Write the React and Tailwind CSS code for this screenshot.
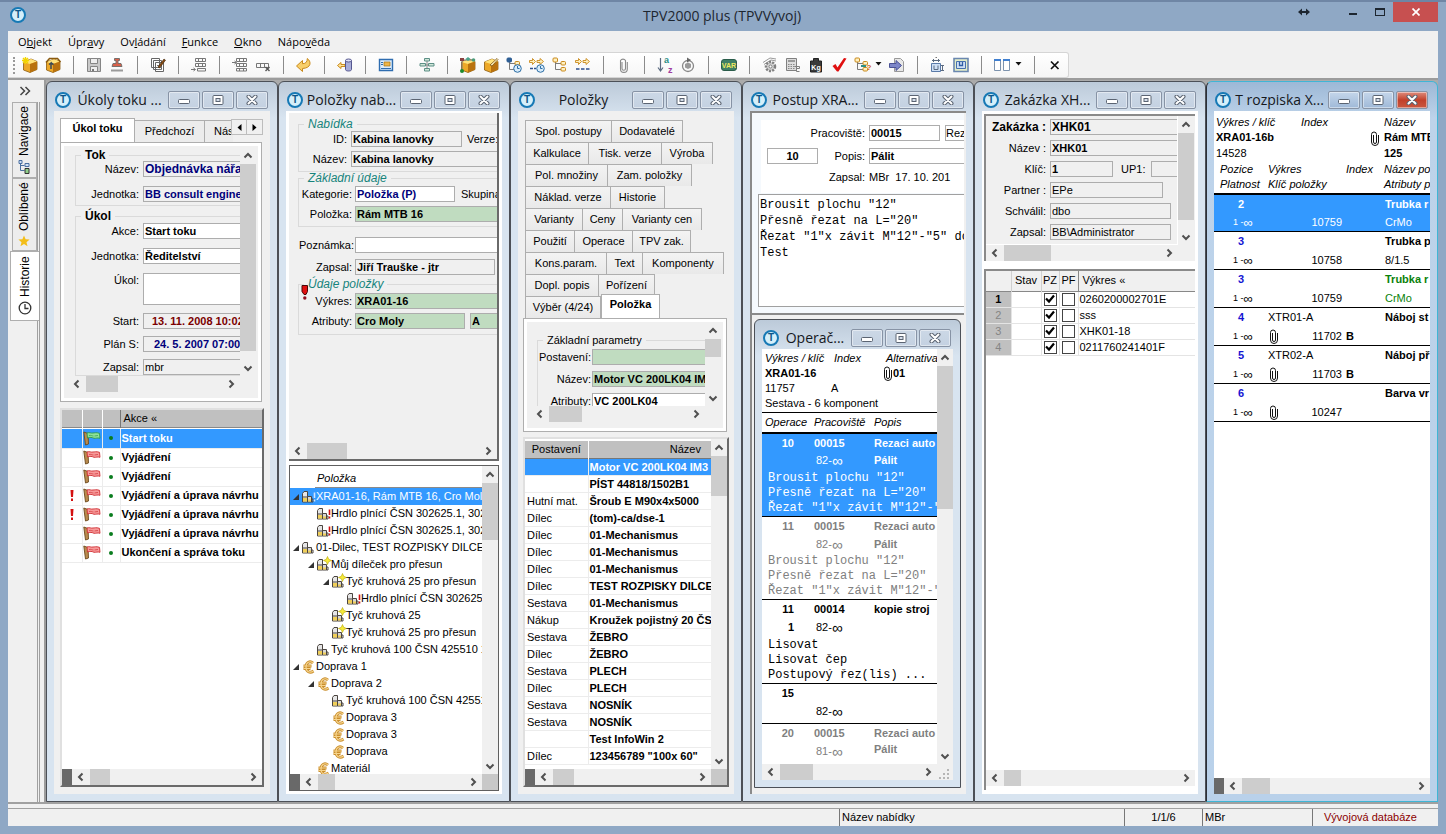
import React from "react";

/* ---------- small shared pieces ---------- */

function Logo() {
  return (
    <span
      aria-hidden="true"
      className="grid h-4 w-4 shrink-0 place-items-center rounded-full border-2 border-[#1679b5] bg-[#d5effa] font-['Liberation_Sans',sans-serif] text-[10px] leading-none font-bold text-[#0f5686]"
    >
      T
    </span>
  );
}

const chevrons = {
  left: "M6.5 1.5 3 5l3.5 3.5",
  right: "M3.5 1.5 7 5 3.5 8.5",
  up: "M1.5 6.5 5 3l3.5 3.5",
  down: "M1.5 3.5 5 7l3.5-3.5",
};

function Chevron({ dir }) {
  return (
    <svg viewBox="0 0 10 10" className="h-[10px] w-[10px]" fill="none" stroke="#505050" strokeWidth="2">
      <path d={chevrons[dir]} />
    </svg>
  );
}

function HScroll({ thumb, dark, corner, className = "" }) {
  return (
    <div className={`flex h-4 shrink-0 bg-[#f0f0f0] ${className}`}>
      {dark && <span className="w-[10px] bg-[#696969]" />}
      <button type="button" aria-label="Doleva" className="grid w-[18px] place-items-center">
        <Chevron dir="left" />
      </button>
      <span className={`bg-[#cdcdcd] ${thumb}`} />
      <button type="button" aria-label="Doprava" className="ml-auto grid w-[18px] place-items-center">
        <Chevron dir="right" />
      </button>
      {corner && <span className="w-4 bg-[#c8c8c8]" />}
    </div>
  );
}

function VScroll({ thumb, className = "" }) {
  return (
    <div className={`flex w-4 shrink-0 flex-col bg-[#f0f0f0] ${className}`}>
      <button type="button" aria-label="Nahoru" className="grid h-[17px] place-items-center">
        <Chevron dir="up" />
      </button>
      <span className={`bg-[#cdcdcd] ${thumb}`} />
      <button type="button" aria-label="Dolů" className="mt-auto grid h-[17px] place-items-center">
        <Chevron dir="down" />
      </button>
    </div>
  );
}

function Field({ label, value = "", lw, w = "w-[170px]", box = "bg-transparent", text = "font-bold", gap = "pr-1" }) {
  return (
    <label className="flex shrink-0 items-center">
      <span className={`shrink-0 text-right whitespace-nowrap ${gap} ${lw}`}>{label}</span>
      <input
        readOnly
        value={value}
        className={`h-4 min-w-0 shrink-0 border border-[#adadad] px-px leading-none outline-none ${w} ${box} ${text}`}
      />
    </label>
  );
}

function Group({ title, legend, children, className = "" }) {
  return (
    <fieldset className={`min-w-0 border border-r-0 border-[#dadada] ${className}`}>
      <legend className={`ml-[5px] px-1 leading-3 ${legend}`}>{title}</legend>
      {children}
    </fieldset>
  );
}

function WinButtons({ active }) {
  const base =
    "grid h-[18px] w-8 place-items-center rounded-[2px] border border-[#8793a5] bg-linear-to-b shadow-[inset_0_0_0_1px_rgba(255,255,255,0.45)]";
  const tone = active ? "from-[#c5d6ea] to-[#9fb9d8]" : "from-[#ccd8e6] to-[#c4d1e1]";
  return (
    <div className="flex gap-[2px]">
      <button type="button" aria-label="Minimalizovat" className={`${base} ${tone}`}>
        <svg viewBox="0 0 12 10" className="h-[10px] w-3">
          <rect x="0.5" y="4.5" width="11" height="4" rx="1" fill="#fff" stroke="#5b6472" />
        </svg>
      </button>
      <button type="button" aria-label="Maximalizovat" className={`${base} ${tone}`}>
        <svg viewBox="0 0 12 10" className="h-[10px] w-3">
          <rect x="1" y="0.5" width="10" height="9" rx="1" fill="#fff" stroke="#5b6472" />
          <rect x="4" y="3.5" width="4" height="3" fill="#d5deea" stroke="#5b6472" />
        </svg>
      </button>
      <button
        type="button"
        aria-label="Zavřít"
        className={`${base} ${active ? "border-[#7b2a22] from-[#dd8b7c] via-[#c2402a] to-[#c9573f]" : tone}`}
      >
        <svg viewBox="0 0 12 10" className="h-[10px] w-3" strokeLinecap="round">
          <path d="M2.5 1.5 9.5 8.5M9.5 1.5 2.5 8.5" stroke="#5b6472" strokeWidth="4" />
          <path d="M2.5 1.5 9.5 8.5M9.5 1.5 2.5 8.5" stroke="#fff" strokeWidth="2" />
        </svg>
      </button>
    </div>
  );
}

function Win({ title, active, className = "", body = "bg-[#f0f0f0]", children }) {
  const frame = active
    ? "border-[#3fb6d6] from-[#9db8d6] via-[#bdd3ea] to-[#b9d1ea] border-l-[#2b2f36]"
    : "border-[#4c5057] from-[#bccad9] via-[#d8e4f0] to-[#d8e4f0]";
  return (
    <section
      aria-label={title}
      className={`flex min-h-0 min-w-0 flex-col rounded-t-[6px] border bg-linear-to-b via-[36px] px-[7px] pb-[7px] ${frame} ${className}`}
    >
      <header className="flex h-[29px] shrink-0 items-center gap-[2px] pt-[7px] pr-[2px] pl-px">
        <Logo />
        <h2 className="min-w-0 flex-1 overflow-hidden text-center font-['Open_Sans',sans-serif] text-[14px] leading-5 whitespace-nowrap text-[#15181d]">
          {title}
        </h2>
        <WinButtons active={active} />
      </header>
      <div className={`flex min-h-0 flex-1 flex-col overflow-hidden ${body}`}>{children}</div>
    </section>
  );
}

function Clip({ className = "" }) {
  return (
    <svg viewBox="0 0 8 15" className={`inline-block h-[15px] w-2 shrink-0 ${className}`} fill="none" stroke="#111">
      <path d="M2.5 4v7a1.5 1.5 0 0 0 3 0V3.5a2.5 2.5 0 0 0-5 0v7.5a3.5 3.5 0 0 0 7 0V4" />
    </svg>
  );
}

/* ---------- toolbar icons, 16 x 16 ---------- */

const Cube = () => (
  <>
    <path d="M1.500 5 9 2l6 2.500v8L8 15.500 1.500 13z" fill="#eda828" stroke="#8a5a10" strokeWidth=".8" />
    <path d="M1.500 5 8 7l7-2.500L9 2z" fill="#ffe27a" />
    <path d="M8 7v8.500l7-3v-8z" fill="#b9720f" />
  </>
);
const Grid3 = ({ y = 1, c = "#777" }) => (
  <g fill="none" stroke={c}>
    <path d={`M4.500 ${y + 0.5}h10v3h-10zM4.500 ${y + 5.5}h10v3h-10zM7.500 ${y + 0.5}v3M11.500 ${y + 0.5}v3M7.500 ${y + 5.5}v3M11.500 ${y + 5.5}v3`} />
  </g>
);
const Clock = () => (
  <g>
    <circle cx="11.500" cy="11.500" r="3.800" fill="#d8ecfb" stroke="#2d6ea5" />
    <path d="M11.500 9v2.500h2" stroke="#2d6ea5" fill="none" />
  </g>
);
const Arrows = () => (
  <path d="M0.500 3.500h3V1.500L6.500 4.500l-3 3v-2h-3zM8 3.500h3V1.500l3.500 3-3.500 3v-2H8z" fill="#fff0c0" stroke="#c98a1c" strokeWidth=".9" />
);
const Tree = ({ c = "#c98a1c", f = "#fff0c0" }) => (
  <>
    <path d="M3.500 4v8.500h6M3.500 6.500h6" stroke="#7b7b7b" fill="none" />
    <rect x="1" y="1" width="4.500" height="4" rx="1" fill={f} stroke={c} />
    <rect x="9" y="4.500" width="4.500" height="3.500" rx="1" fill="#fff0c0" stroke="#c98a1c" />
    <rect x="9" y="10.500" width="4.500" height="3.500" rx="1" fill="#fff0c0" stroke="#c98a1c" />
  </>
);

const icons = {
  newBox: (
    <>
      <Cube />
      <path d="M3.500 0v7M0 3.500h7M1 1l5 5M6 1 1 6" stroke="#f2d400" strokeWidth="1.400" />
    </>
  ),
  openBox: (
    <>
      <Cube />
      <path d="M1 5.500 4.500 1.500h8L15.500 5" fill="none" stroke="#8a5a10" strokeWidth="1.600" />
      <path d="M6 12V6l-2 1.500M6 6l2.500 1.500" fill="none" stroke="#3c4a55" strokeWidth="1.500" />
    </>
  ),
  save: (
    <>
      <path d="M1.500 1.500h13v13h-13z" fill="#c9c9c9" stroke="#858585" />
      <path d="M4.500 1.500h7v5h-7zM4.500 9.500h7v5h-7z" fill="#eee" stroke="#858585" />
      <path d="M6 12h2v2H6z" fill="#777" />
    </>
  ),
  stamp: (
    <>
      <path d="M5.500 1.500h5v2h-1.500v3h3l1 3h-10l1-3h3v-3H5.500z" fill="#d9604a" stroke="#77706c" />
      <path d="M2 12.500h12v2H2z" fill="#9a9a9a" />
    </>
  ),
  notes: (
    <>
      <path d="M1.500 1.500h8v9h-8zM3.500 3.500h8v9h-8zM5.500 5.500h8v9h-8z" fill="#fff" stroke="#666" />
      <path d="M7 8.500h5M7 10.500h5M7 12.500h4" stroke="#777" />
      <path d="M8 10 14 2l1.500 1.200L9.500 11z" fill="#8a4b12" stroke="#3b2308" strokeWidth=".6" />
    </>
  ),
  gridAdd: (
    <>
      <Grid3 />
      <path d="M0 12.500h4M2.500 11l2 1.500-2 1.500M6.500 11.500h8v2.500h-8z" stroke="#777" fill="none" />
    </>
  ),
  gridIns: (
    <>
      <Grid3 />
      <path d="M0 5.500h4M2.500 4l2 1.500-2 1.500M4.500 11.500h10v2.500h-10zM7.500 11.500V14M11.500 11.500V14" stroke="#777" fill="none" />
    </>
  ),
  gridDel: (
    <>
      <path d="M1.500 6.500h12v4h-12zM5.500 6.500v4M9.500 6.500v4" stroke="#777" fill="none" />
      <path d="m10.500 10 4 4M14.500 10l-4 4" stroke="#555" strokeWidth="1.400" />
    </>
  ),
  undo: <path d="M.500 9 6.500 3.500v3.200c3.500 0 4.800-2 4.800-5.200 4.200 3 4.200 9.500-4.800 10v3z" fill="#f8cf6a" stroke="#c98a1c" />,
  dbBack: (
    <>
      <path d="M.500 8.500 4 5.500v2h4v2H4v2z" fill="#ffe39a" stroke="#c98a1c" />
      <path d="M8.500 3.500v9c0 2 6 2 6 0v-9" fill="#a9add8" stroke="#54568f" />
      <ellipse cx="11.500" cy="3.500" rx="3" ry="1.500" fill="#dfe0f4" stroke="#54568f" />
    </>
  ),
  picture: (
    <>
      <path d="M1.500 2.500h13v11h-13z" fill="#dcecfb" stroke="#2f6db0" strokeWidth="1.400" />
      <path d="M6 5h6v4H6z" fill="#efb548" stroke="#a77413" strokeWidth=".7" />
      <path d="M3 5.500h2M3 7.500h2M3 11.500h10" stroke="#2f6db0" />
    </>
  ),
  orgChart: (
    <>
      <path d="M8 4v9M3 8h10" stroke="#888" />
      <path d="M5.500 1.500h5v2.500h-5zM1 6.500h5.500V9H1zM9.500 6.500H15V9H9.500zM5.500 11.500h5V14h-5z" fill="#cfe6d8" stroke="#5c8f86" />
    </>
  ),
  boxNet: (
    <>
      <Cube />
      <path d="M2 3h11M2 3v11" stroke="#777" />
      <path d="M0 1h4v3H0z" fill="#8a4040" />
      <circle cx="2" cy="14" r="2" fill="#1d8a2c" />
      <path d="M5.500 2 8 0l2.500 2L8 4z" fill="#4aa38c" />
      <circle cx="13.500" cy="3" r="1.800" fill="#4a9a78" />
    </>
  ),
  boxEdit: (
    <>
      <Cube />
      <path d="M7 8 14 1.500l1 1L9 9z" fill="#fff3c0" stroke="#7a5110" strokeWidth=".8" />
    </>
  ),
  treeClock: (
    <>
      <Tree c="#2f5f95" f="#2f5f95" />
      <Clock />
    </>
  ),
  flowClock: (
    <>
      <Arrows />
      <path d="M1 11.500h3M5 11.500h2" stroke="#2d4f8f" strokeWidth="1.500" />
      <Clock />
    </>
  ),
  tree: <Tree />,
  flow: (
    <>
      <Arrows />
      <path d="M1 12h3.500M6 12h3.500M11 12h3.500" stroke="#2d4f8f" strokeWidth="1.500" />
    </>
  ),
  clip: (
    <path d="M6 5v6.500a1.500 1.500 0 0 0 3.500 0V3.500a3 3 0 0 0-5 0V12a3.300 3.300 0 0 0 6.800 0V5" fill="none" stroke="#8a8a8a" strokeWidth="1.100" />
  ),
  sort: (
    <>
      <path d="M3.500 1v12M1 10.500l2.500 3.500 2.500-3.500" fill="none" stroke="#5a6a80" strokeWidth="1.200" />
      <text x="7" y="6" fontSize="9" fontWeight="bold" fill="#2a8f86" fontFamily="Liberation Sans, sans-serif">a</text>
      <text x="11" y="16" fontSize="9" fontWeight="bold" fill="#a03ba0" fontFamily="Liberation Sans, sans-serif">z</text>
    </>
  ),
  history: (
    <>
      <circle cx="8" cy="9" r="5.500" fill="none" stroke="#888" strokeWidth="1.300" />
      <path d="m8 5.500 3 1.500v3.500l-3 1.500-3-1.500V7z" fill="#9a9a9a" />
      <path d="M7 .500v5l4-2.500z" fill="#666" />
    </>
  ),
  varBadge: (
    <>
      <rect x=".500" y="2.500" width="15" height="11" rx="2.500" fill="#3f8067" stroke="#2a5c4a" />
      <text x="8" y="10.800" fontSize="7" fontWeight="bold" textAnchor="middle" fill="#f0ea60" fontFamily="Liberation Sans, sans-serif">VAR</text>
    </>
  ),
  gears: (
    <>
      <path d="M1 5.500 8 1l6 1M2 7.500 9 3l5 1" stroke="#9a9a9a" fill="none" />
      <circle cx="8.500" cy="9.500" r="4.500" fill="#d4d4d4" stroke="#808080" strokeWidth="2.500" strokeDasharray="2 1.200" />
      <circle cx="8.500" cy="9.500" r="1.500" fill="#fff" stroke="#808080" />
    </>
  ),
  calc: (
    <>
      <path d="M1.500 1.500h10v12h-10z" fill="#ddd" stroke="#808080" />
      <path d="M3 3h7v2H3z" fill="#999" />
      <path d="M3 7.500h7M3 9.500h7M3 11.500h7" stroke="#888" strokeDasharray="1.500 1" />
      <path d="M9.500 9.500h5v2h-3v3h3" stroke="#808080" fill="none" />
    </>
  ),
  weight: (
    <>
      <path d="M5.500 1.500h5v2.500h3v11h-11V4h3z" fill="#3a3a3a" stroke="#222" />
      <text x="8" y="12.500" fontSize="7" fontWeight="bold" textAnchor="middle" fill="#fff" fontFamily="Liberation Sans, sans-serif">Kg</text>
    </>
  ),
  check: <path d="M1.500 9 4.500 7l2 3.500L13 1l2.500.500L7.500 14.500H6z" fill="#e01010" />,
  treeAsk: (
    <>
      <Tree />
      <path d="M7 9h5" stroke="#2f8f86" strokeWidth="2" />
      <text x="12.500" y="13" fontSize="8" fontWeight="bold" fill="#d05a20" fontFamily="Liberation Sans, sans-serif">?</text>
    </>
  ),
  exportDoc: (
    <>
      <path d="M5.500 1.500h6l3 3v10h-9z" fill="#e8e8e8" stroke="#999" />
      <path d="M.500 6.500H7V3.500l5.500 5L7 13.500v-3H.500z" fill="#7d86c9" stroke="#4a5296" />
    </>
  ),
  dims: (
    <>
      <path d="M1.500 6.500h9v8h-9z" fill="#cfe0f5" stroke="#5a7aa8" />
      <path d="M4 8.500v4h4v-4M3.500 5V2M8.500 5V2M2 3.500h8M12.500 8v6M11 8.500h3M11 13.500h3" fill="none" stroke="#5a6a80" />
      <path d="M5.500.500h1.500" stroke="#777" />
    </>
  ),
  dimsBox: (
    <>
      <path d="M1 1.500h14v13H1z" fill="#e3edc8" stroke="#6a87b0" strokeWidth="1.600" />
      <path d="M3.500 4.500h9v7h-9z" fill="#cfe0f5" stroke="#4670ad" />
      <path d="M6.500 5v3.500h3V5" fill="none" stroke="#2f5fa5" strokeWidth="1.300" />
    </>
  ),
  columns: (
    <>
      <path d="M.500 2.500h6v11h-6zM9.500 2.500h6v11h-6z" fill="#fff" stroke="#7d93ad" />
      <path d="M0 3h7M9 3h7" stroke="#3f7fd0" strokeWidth="2" />
    </>
  ),
  close: <path d="m4 4.500 7.500 7.500M11.500 4.500 4 12" stroke="#111" strokeWidth="1.700" />,
};

const toolbar = [
  ["newBox", "Nový"], ["openBox", "Otevřít"], null,
  ["save", "Uložit"], ["stamp", "Razítko"], null,
  ["notes", "Poznámky"], null,
  ["gridAdd", "Přidat řádek"], null,
  ["gridIns", "Vložit řádek"], ["gridDel", "Smazat řádek"], null,
  ["undo", "Zpět"], null,
  ["dbBack", "Databáze"], null,
  ["picture", "Obrázek"], null,
  ["orgChart", "Struktura"], null,
  ["boxNet", "Vazby"], ["boxEdit", "Upravit"], ["treeClock", "Strom v čase"], ["flowClock", "Postup v čase"], ["tree", "Strom"], ["flow", "Postup"], null,
  ["clip", "Příloha"], null,
  ["sort", "Seřadit"], ["history", "Obnovit"], null,
  ["varBadge", "Varianty"], null,
  ["gears", "Nastavení"], ["calc", "Kalkulace"], ["weight", "Hmotnost"], ["check", "Schválit"], ["treeAsk", "Kde použito", true], ["exportDoc", "Export"], null,
  ["dims", "Rozměry"], ["dimsBox", "Rozměry výkresu"], null,
  ["columns", "Sloupce", true], null,
  ["close", "Zavřít"],
];

function Toolbar() {
  return (
    <div className="flex h-[26px] w-fit items-center rounded-r-[3px] border border-l-0 border-[#d5d5d5] bg-linear-to-b from-white to-[#f6f6f6] pr-[2px] pl-[5px]">
      <span className="mr-[3px] h-[17px] w-0 border-l-2 border-dotted border-[#9a9a9a]" />
      {toolbar.map((t, i) =>
        t === null ? (
          <span key={i} className="flex w-[18px] shrink-0 justify-center">
            <span className="h-[18px] w-px bg-[#8b8b8b]" />
          </span>
        ) : (
          <button key={i} type="button" aria-label={t[1]} className="flex h-6 items-center">
            <span className="grid w-[23px] place-items-center">
              <svg viewBox="0 0 16 16" className="h-4 w-4 overflow-visible">{icons[t[0]]}</svg>
            </span>
            {t[2] && (
              <svg viewBox="0 0 12 6" className="mb-[3px] h-[6px] w-3">
                <path d="M2.500 1h6L5.500 4.500z" fill="#111" />
              </svg>
            )}
          </button>
        )
      )}
    </div>
  );
}

/* ---------- side tabs ---------- */

function SideBar() {
  const tab = "flex rotate-180 items-center justify-center gap-1 border border-[#aeaeae] [writing-mode:vertical-rl] text-[12px]";
  return (
    <nav className="flex w-9 shrink-0 flex-col bg-[#f0f0f0]">
      <button type="button" aria-label="Rozbalit" className="grid h-[22px] w-[34px] place-items-center">
        <svg viewBox="0 0 12 10" className="h-[10px] w-3" fill="none" stroke="#444" strokeWidth="1.500">
          <path d="M1.500 1 5.500 5l-4 4M6.500 1l4 4-4 4" />
        </svg>
      </button>
      <div className="mr-1 flex flex-1 flex-col border-r-[3px] border-double border-[#a0a0a0] pl-1">
        <button type="button" className={`${tab} h-[76px] bg-[#ededed]`}>
          <svg viewBox="0 0 12 14" className="h-[14px] w-3 rotate-180" fill="none" stroke="#4a6fa0">
            <path d="M2.500 2v8.500h4M2.500 5.500h4" />
            <path d="M1 .500h3v3H1z" fill="#cfe0f5" />
            <path d="M7 8.500h4v5H7z" fill="#8fce8a" stroke="#333" />
            <path d="M7 3.500h4v3H7z" fill="#cfe0f5" />
          </svg>
          Navigace
        </button>
        <button type="button" className={`${tab} h-[73px] bg-[#ededed]`}>
          <svg viewBox="0 0 12 12" className="h-3 w-3 rotate-180">
            <path d="M6 .500 7.600 4.300l4 .300-3.100 2.600 1 4L6 9 2.500 11.200l1-4L.400 4.600l4-.300z" fill="#f3be19" />
          </svg>
          Oblíbené
        </button>
        <button type="button" className={`${tab} -mr-[2px] -ml-[2px] h-[70px] border-l-0 bg-white`}>
          <svg viewBox="0 0 14 14" className="h-[14px] w-[14px] rotate-180" fill="none" stroke="#333" strokeWidth="1.300">
            <circle cx="7" cy="7" r="5.800" />
            <path d="M7 3v4.500h3.500" />
          </svg>
          Historie
        </button>
      </div>
    </nav>
  );
}

/* ---------- window 1 ---------- */

function Flag({ green }) {
  const a = green ? "#8fe29a" : "#f79a9a";
  const b = green ? "#2f9a4a" : "#cf2f33";
  return (
    <svg viewBox="0 0 18 15" className="mx-auto h-[15px] w-[18px]">
      <path d="M.800 1 5 2.500 5.500 13l-3 1z" fill="#b98b4d" stroke="#6d4a1d" strokeWidth=".9" />
      <path d="M4 2c2.500-1 4 .500 6 0 1.500 0 3-.800 6.500.300l.500 5c-2.500-.800-4 .200-6 0-2-1-4-1.300-6.500-.300z" fill={a} stroke={b} strokeWidth=".9" />
      <path d="M6 4.500c2-.500 3 .500 4.500.500M11.500 5 15 4.500" stroke={b} fill="none" strokeWidth=".7" />
    </svg>
  );
}

function Bang({ className = "" }) {
  return (
    <svg viewBox="0 0 4 11" className={`h-[11px] w-1 ${className}`} fill="#d41010">
      <path d="M.500 0h3l-.500 7H1zM1 8.500h2V11H1z" />
    </svg>
  );
}

const tasks = [
  ["Start toku", false, true],
  ["Vyjádření"],
  ["Vyjádření"],
  ["Vyjádření a úprava návrhu", true],
  ["Vyjádření a úprava návrhu", true],
  ["Vyjádření a úprava návrhu"],
  ["Ukončení a správa toku"],
];

function TasksWindow() {
  return (
    <Win title="Úkoly toku ...">
      <div className="flex min-h-0 flex-1 flex-col pt-[7px] pr-[6px] pb-[7px] pl-[6px]">
        <div className="relative mr-px flex h-6 shrink-0 items-end overflow-hidden" role="tablist">
          <button type="button" role="tab" aria-selected="true" className="h-6 w-[75px] border border-b-0 border-[#aeaeae] bg-white pb-1 font-bold">
            Úkol toku
          </button>
          <button type="button" role="tab" className="h-[22px] w-[70px] border-t border-r border-[#aeaeae] bg-[#ececec]">Předchozí</button>
          <button type="button" role="tab" className="h-[22px] w-7 shrink-0 overflow-hidden border-t border-[#aeaeae] bg-[#ececec] pl-[9px] text-left">Nás</button>
          <div className="absolute top-px right-0 flex bg-[#f0f0f0]">
            <button type="button" aria-label="Předchozí záložky" className="grid h-4 w-4 place-items-center border border-[#bdbdbd]">
              <svg viewBox="0 0 5 7" className="h-[7px] w-[5px]"><path d="M4.500 0v7L.500 3.500z" /></svg>
            </button>
            <button type="button" aria-label="Další záložky" className="grid h-4 w-4 place-items-center border border-l-0 border-[#bdbdbd]">
              <svg viewBox="0 0 5 7" className="h-[7px] w-[5px]"><path d="M.500 0v7l4-3.500z" /></svg>
            </button>
          </div>
        </div>
        <div className="mr-[2px] h-[260px] shrink-0 border border-[#aeaeae] bg-white p-[3px]">
          <div className="flex h-full bg-[#f0f0f0]">
            <div className="flex min-w-0 flex-1 flex-col">
              <div className="h-[230px] overflow-hidden pt-[3px] pl-[11px]">
                <Group title="Tok" legend="font-bold text-[12px]" className="flex flex-col gap-[9px] pb-[3px]">
                  <Field label="Název:" value="Objednávka nářa" lw="w-[67px]" text="font-bold text-[12px] text-[#00007b]" />
                  <Field label="Jednotka:" value="BB consult engine" lw="w-[67px]" text="font-bold text-[#00007b]" />
                </Group>
                <Group title="Úkol" legend="font-bold text-[12px]" className="mt-1 flex flex-col pt-px">
                  <div className="flex flex-col gap-[9px]">
                    <Field label="Akce:" value="Start toku" lw="w-[67px]" box="bg-white" />
                    <Field label="Jednotka:" value="Ředitelství" lw="w-[67px]" box="bg-white" />
                    <label className="flex">
                      <span className="w-[67px] shrink-0 pt-px pr-1 text-right">Úkol:</span>
                      <textarea readOnly className="h-8 w-full shrink-0 resize-none border border-[#adadad] bg-white outline-none" />
                    </label>
                  </div>
                  <div className="flex flex-col gap-[7px] pt-2">
                    <Field label="Start:" value="13. 11. 2008 10:02" lw="w-[67px]" w="w-[120px]" text="pl-[8px] font-bold text-[#7b0000]" />
                    <Field label="Plán S:" value="24. 5. 2007 07:00" lw="w-[67px]" w="w-[120px]" text="pl-[10px] font-bold text-[#00007b]" />
                    <Field label="Zapsal:" value="mbr" lw="w-[67px]" text="" />
                  </div>
                </Group>
              </div>
              <HScroll thumb="w-8" className="ml-1" />
            </div>
            <VScroll thumb="flex-1 mb-2" className="mt-px mr-[2px] mb-[22px]" />
          </div>
        </div>
        <div className="mt-[6px] flex min-h-0 flex-1 flex-col border-2 border-t-[#e0e0e0] border-r-[#6a6a6a] border-b-[#6a6a6a] border-l-[#e0e0e0] bg-white">
          <table className="w-full table-fixed border-collapse">
            <colgroup>
              <col className="w-5" /><col className="w-5" /><col className="w-[18px]" /><col />
            </colgroup>
            <thead>
              <tr className="h-[17px] border-b border-[#888] bg-[#c0c0c0] text-left">
                <th className="border-r border-white" /><th className="border-r border-white" /><th className="border-r border-[#777]" />
                <th className="pl-[3px] font-normal">Akce «</th>
              </tr>
            </thead>
            <tbody>
              <tr className="h-[2px]"><td colSpan={4} /></tr>
              {tasks.map(([name, bang, sel], i) => (
                <tr key={i} className={`h-[19px] border-b border-[#ececec] ${sel ? "bg-[#3399ff] text-white" : ""}`}>
                  <td className="border-r border-[#ececec]">{bang && <Bang className="mx-auto" />}</td>
                  <td className="border-r border-[#ececec]"><Flag green={sel} /></td>
                  <td className="border-r border-[#ececec]"><span className="mx-auto block h-1 w-1 rounded-full bg-[#0a7d1e]" /></td>
                  <td className="overflow-hidden pl-px font-bold whitespace-nowrap">{name}</td>
                </tr>
              ))}
            </tbody>
          </table>
          <HScroll dark thumb="w-5" className="mt-auto" />
        </div>
      </div>
    </Win>
  );
}

/* ---------- window 2 ---------- */

function ItemIcon({ star, mark, sel }) {
  return (
    <svg viewBox="0 0 14 12" className="h-3 w-[14px] shrink-0 overflow-visible">
      <path d="M.500 2.500 2 .500h3.500v10.500h-5z" fill="#e6e6e6" stroke="#4b4540" />
      <path d="M1 7h4v3.500H1z" fill="#f0cf58" />
      <path d="M5.500 5.500h4v5.500h-4z" fill="#d6d6d6" stroke="#4b4540" />
      <path d="M6 8.500h3v2H6z" fill="#f0cf58" />
      <path d="M.500 6h5M9.500 8H11v3H9.500" stroke="#4b4540" fill="none" />
      {star && <path d="m10.500-2.500 1.200 2.800 2.800 1.200-2.800 1.200-1.200 2.800-1.200-2.800L6.500 1.500 9.300.300z" fill="#f6ea3a" stroke="#b8a800" strokeWidth=".6" />}
      {mark ? <path d="M12.500 1.500v5.500M12.500 8.500v2" stroke={sel ? "#cfe4ff" : "#d41010"} strokeWidth="1.600" /> : null}
    </svg>
  );
}

function CostIcon() {
  return (
    <svg viewBox="0 0 14 14" className="h-[14px] w-[14px] shrink-0" fill="none">
      <path d="M11 3C8 .500 4 2 4 7s4 6.500 7.500 4M1.500 6h8M1.500 8.500h7" stroke="#c98d2b" strokeWidth="2.800" />
      <path d="M11 3C8 .500 4 2 4 7s4 6.500 7.500 4M1.500 6h8M1.500 8.500h7" stroke="#f6d48c" strokeWidth="1.200" />
    </svg>
  );
}

/* indent level, has expander, icon, red mark, text, selected */
const tree = [
  [0, 1, "item", 1, "XRA01-16, Rám MTB 16, Cro Moly,", true],
  [1, 0, "item", 1, "Hrdlo plnící ČSN 302625.1, 302"],
  [1, 0, "item", 1, "Hrdlo plnící ČSN 302625.1, 302"],
  [0, 1, "item", 0, "01-Dilec, TEST ROZPISKY DILCE, #"],
  [1, 1, "star", 0, "Můj díleček pro přesun"],
  [2, 1, "star", 0, "Tyč kruhová 25 pro přesun"],
  [3, 0, "item", 1, "Hrdlo plnící ČSN 302625."],
  [2, 0, "star", 0, "Tyč kruhová 25"],
  [2, 0, "star", 0, "Tyč kruhová 25 pro přesun"],
  [1, 0, "item", 0, "Tyč kruhová 100 ČSN 425510 1"],
  [0, 1, "cost", 0, "Doprava 1"],
  [1, 1, "cost", 0, "Doprava 2"],
  [2, 0, "item", 0, "Tyč kruhová 100 ČSN 42551"],
  [2, 0, "cost", 0, "Doprava 3"],
  [2, 0, "cost", 0, "Doprava 3"],
  [2, 0, "cost", 0, "Doprava"],
  [1, 0, "cost", 0, "Materiál"],
];
const indents = ["pl-0", "pl-[15px]", "pl-[30px]", "pl-[45px]"];
const green = "bg-[#c0dcc0]";
const teal = "italic text-[12px] text-[#17847c]";

function OfferWindow() {
  return (
    <Win title="Položky nab..." body="bg-white p-[3px] pt-[2px]">
      <div className="flex h-[348px] shrink-0 flex-col border-r-2 border-b-2 border-[#6a6a6a] bg-[#f0f0f0]">
        <div className="flex-1 overflow-hidden pt-[5px] pl-[9px]">
          <Group title="Nabídka" legend={teal} className="flex flex-col gap-1 pt-px pb-1">
            <div className="flex items-center">
              <Field label="ID:" value="Kabina lanovky" lw="w-[52px]" w="w-[111px]" />
              <span className="pl-[5px]">Verze:</span>
            </div>
            <Field label="Název:" value="Kabina lanovky" lw="w-[52px]" />
          </Group>
          <Group title="Základní údaje" legend={teal} className="flex flex-col gap-1 pt-[2px] pb-1">
            <div className="flex items-center">
              <Field label="Kategorie:" value="Položka (P)" lw="w-14" w="w-[100px]" box="bg-white" text="font-bold text-[#00007b]" gap="pr-[3px]" />
              <span className="pl-[6px] whitespace-nowrap">Skupina</span>
            </div>
            <Field label="Položka:" value="Rám MTB 16" lw="w-14" box={green} gap="pr-[3px]" />
          </Group>
          <div className="flex flex-col gap-[6px] pt-[10px] pb-[3px] pl-px">
            <Field label="Poznámka:" lw="w-14" box="bg-white" gap="pr-[3px]" />
            <Field label="Zapsal:" value="Jiří Trauške - jtr" lw="w-14" w="w-[140px]" gap="pr-[3px]" />
          </div>
          <div className="relative">
            <Group title="Údaje položky" legend={teal} className="flex flex-col gap-1 pt-[3px] pb-[5px]">
              <Field label="Výkres:" value="XRA01-16" lw="w-14" box={green} gap="pr-[3px]" />
              <div className="flex gap-[5px]">
                <Field label="Atributy:" value="Cro Moly" lw="w-14" w="w-[110px]" box={green} gap="pr-[3px]" />
                <input readOnly aria-label="Atribut 2" value="A" className={`h-4 w-20 shrink-0 border border-[#adadad] px-px font-bold outline-none ${green}`} />
              </div>
            </Group>
            <svg viewBox="0 0 7 15" className="absolute top-[7px] left-[3px] h-[15px] w-[7px]">
              <path d="M1 .500h5.500v6L5 9.500H3L1 6.500z" fill="#e01010" stroke="#4a0808" />
              <circle cx="3.800" cy="13" r="1.700" fill="#901020" />
            </svg>
          </div>
        </div>
        <HScroll thumb="w-10" />
      </div>
      <div className="mt-1 flex min-h-0 flex-1 flex-col border border-[#5f5f5f]">
        <div className="flex min-h-0 flex-1">
          <div className="min-w-0 flex-1 overflow-hidden">
            <div className="ml-[25px] flex h-[22px] items-center border-b border-[#8a8a8a] pt-[3px] pl-[2px] italic">Položka</div>
            <ul>
              {tree.map(([lvl, exp, icon, mark, text, sel], i) => (
                <li key={i} className={`flex h-[17px] items-center whitespace-nowrap ${indents[lvl]} ${sel ? "bg-[#3399ff] text-white" : ""}`}>
                  <span className="grid w-3 shrink-0 place-items-center">
                    {exp ? <svg viewBox="0 0 6 6" className="h-[6px] w-[6px]"><path d="M6 0v6H0z" fill="#333" /></svg> : null}
                  </span>
                  {icon === "cost" ? <CostIcon /> : <ItemIcon star={icon === "star"} mark={mark} sel={sel} />}
                  {text}
                </li>
              ))}
            </ul>
          </div>
          <VScroll thumb="h-[57px]" />
        </div>
        <HScroll dark corner thumb="w-[17px]" />
      </div>
    </Win>
  );
}

/* ---------- window 3 ---------- */

const tabRows = [
  [["Spol. postupy", "w-[87px]"], ["Dodavatelé", "w-[72px]"]],
  [["Kalkulace", "w-16"], ["Tisk. verze", "w-[74px]"], ["Výroba", "w-[52px]"]],
  [["Pol. množiny", "w-[83px]"], ["Zam. položky", "w-[85px]"]],
  [["Náklad. verze", "w-[86px]"], ["Historie", "w-[55px]"]],
  [["Varianty", "w-[58px]"], ["Ceny", "w-[41px]"], ["Varianty cen", "w-[80px]"]],
  [["Použití", "w-[50px]"], ["Operace", "w-[59px]"], ["TPV zak.", "w-[59px]"]],
  [["Kons.param.", "w-[82px]"], ["Text", "w-[37px]"], ["Komponenty", "w-[82px]"]],
  [["Dopl. popis", "w-[74px]"], ["Pořízení", "w-[57px]"]],
];

const items = [
  ["", "Motor VC 200LK04 IM3", true],
  ["", "PÍST 44818/1502B1"],
  ["Hutní mat.", "Šroub E M90x4x5000"],
  ["Dílec", "(tom)-ca/dse-1"],
  ["Dílec", "01-Mechanismus"],
  ["Dílec", "01-Mechanismus"],
  ["Dílec", "01-Mechanismus"],
  ["Dílec", "TEST ROZPISKY DILCE"],
  ["Sestava", "01-Mechanismus"],
  ["Nákup", "Kroužek pojistný 20 ČS"],
  ["Sestava", "ŽEBRO"],
  ["Dílec", "ŽEBRO"],
  ["Sestava", "PLECH"],
  ["Dílec", "PLECH"],
  ["Sestava", "NOSNÍK"],
  ["Sestava", "NOSNÍK"],
  ["", "Test InfoWin 2"],
  ["Dílec", '123456789 "100x 60"'],
];

function ItemsWindow() {
  const tab = "-ml-px h-[22px] shrink-0 border border-b-0 border-[#aeaeae] bg-linear-to-b from-[#f3f3f3] to-[#e9e9e9]";
  return (
    <Win title="Položky">
      <div className="flex min-h-0 flex-1 flex-col pt-[9px] pr-[5px] pb-[7px] pl-[5px]">
        <div role="tablist" className="shrink-0 pl-[3px]">
          {tabRows.map((row, i) => (
            <div key={i} className="flex">
              {row.map(([t, w]) => (
                <button key={t} type="button" role="tab" className={`${tab} ${w}`}>{t}</button>
              ))}
            </div>
          ))}
          <div className="flex h-[22px] items-end">
            <button type="button" role="tab" className={`${tab} w-[76px]`}>Výběr (4/24)</button>
            <button type="button" role="tab" aria-selected="true" className="h-6 w-[59px] border border-b-0 border-[#aeaeae] bg-white pb-1 font-bold">Položka</button>
          </div>
        </div>
        <div className="mr-[2px] h-[114px] shrink-0 border border-[#aeaeae] bg-white p-[3px]">
          <div className="flex h-full bg-[#f0f0f0] pb-[6px]">
            <div className="flex min-w-0 flex-1 flex-col">
              <div className="flex-1 overflow-hidden pt-[12px] pl-[10px]">
                <Group title="Základní parametry" legend="" className="flex flex-col gap-[6px] pt-[3px]">
                  <Field label="Postavení:" lw="w-[54px]" box={green} gap="pr-px" />
                  <Field label="Název:" value="Motor VC 200LK04 IM" lw="w-[54px]" w="w-[150px]" box={green} gap="pr-px" />
                  <Field label="Atributy:" value="VC 200LK04" lw="w-[54px]" box="bg-white" gap="pr-px" />
                </Group>
              </div>
              <HScroll thumb="w-[33px]" className="ml-1" />
            </div>
            <VScroll thumb="h-[18px]" className="mr-[2px] mb-4" />
          </div>
        </div>
        <div className="mt-[5px] flex min-h-0 flex-1 flex-col border-2 border-t-[#e0e0e0] border-r-[#6a6a6a] border-b-[#6a6a6a] border-l-[#e0e0e0] bg-white">
          <div className="flex min-h-0 flex-1">
            <div className="min-w-0 flex-1 overflow-hidden">
              <table className="w-full table-fixed border-collapse">
                <colgroup><col className="w-[63px]" /><col /></colgroup>
                <thead>
                  <tr className="h-[18px] border-t-2 border-b border-t-white border-b-[#777] bg-[#c0c0c0]">
                    <th className="border-r border-white font-normal">Postavení</th>
                    <th className="pr-[10px] text-right font-normal">Název</th>
                  </tr>
                </thead>
                <tbody>
                  {items.map(([pos, name, sel], i) => (
                    <tr key={i} className={`h-[17px] border-b border-[#ececec] leading-4 ${sel ? "bg-[#3399ff] text-white" : ""}`}>
                      <td className="border-r border-[#ececec] pl-[2px]">{pos}</td>
                      <td className="overflow-hidden pl-px font-bold whitespace-nowrap">{name}</td>
                    </tr>
                  ))}
                </tbody>
              </table>
            </div>
            <VScroll thumb="h-10" />
          </div>
          <HScroll dark corner thumb="w-[21px]" />
        </div>
      </div>
    </Win>
  );
}

/* ---------- window 4 ---------- */

const mono = "font-['Liberation_Mono',monospace] text-[12px]";
const cut = ['Brousit plochu "12"', 'Přesně řezat na L="20"', 'Řezat "1"x závit M"12"-"'];
const operations = [
  { no: "10", place: "00015", from: "82", name: "Rezaci auto", note: "Pálit", lines: cut, tone: "bg-[#3399ff] text-white" },
  { no: "11", place: "00015", from: "82", name: "Rezaci auto", note: "Pálit", lines: cut, tone: "text-[#808080]" },
  { no: "11", sub: "1", place: "00014", from: "82", name: "kopie stroj", lines: ["Lisovat", "Lisovat čep", "Postupový řez(lis) ..."], tone: "text-black" },
  { no: "15", from: "82", tone: "text-black" },
  { no: "20", place: "00015", from: "81", name: "Rezaci auto", note: "Pálit", tone: "text-[#808080]", last: true },
];

function OperationsWindow() {
  return (
    <Win title="Operač..." className="mt-1 mr-[5px] mb-[6px] ml-[2px] flex-1" body="bg-white">
      <div className="flex min-h-0 flex-1">
        <div className="min-w-0 flex-1 overflow-hidden whitespace-nowrap">
          <dl className="grid grid-cols-[69px_46px_1fr] pt-[2px] pl-[3px] leading-[15px]">
            <dt className="italic">Výkres / klíč</dt><dt className="italic">Index</dt><dt className="pl-[6px] italic">Alternativa</dt>
            <dd className="font-bold">XRA01-16</dd><dd /><dd className="flex font-bold"><Clip className="mr-px ml-1" />01</dd>
            <dd>11757</dd><dd className="-ml-[3px]">A</dd><dd />
            <dd className="col-span-3">Sestava - 6 komponent</dd>
          </dl>
          <table className="mt-px w-full table-fixed border-collapse">
            <colgroup><col className="w-[52px]" /><col className="w-[60px]" /><col /></colgroup>
            <thead>
              <tr className="h-[20px] border-t border-b-2 border-black text-left italic">
                <th className="pl-[3px] font-normal">Operace</th><th className="font-normal">Pracoviště</th><th className="font-normal">Popis</th>
              </tr>
            </thead>
            {operations.map((o, i) => (
              <tbody key={i} className={`${o.last ? "" : "border-b border-black"} ${o.tone}`}>
                <tr className="h-5 font-bold">
                  <td className="pr-5 text-right">{o.no}</td><td>{o.place}</td><td className="overflow-hidden">{o.name}</td>
                </tr>
                <tr className={o.lines ? "h-4" : "h-5 align-top"}>
                  <td className="pr-5 text-right font-bold">{o.sub}</td>
                  <td>
                    <span className="flex h-4 items-center pl-[2px]">{o.from}-<span className="text-[15px] leading-none">∞</span></span>
                  </td>
                  <td className="font-bold">{o.note}</td>
                </tr>
                {o.lines && (
                  <tr>
                    <td colSpan={3} className={`overflow-hidden pt-[2px] pl-[6px] leading-[15px] ${mono}`}>
                      {o.lines.map((l) => <div key={l}>{l}</div>)}
                    </td>
                  </tr>
                )}
              </tbody>
            ))}
          </table>
        </div>
        <VScroll thumb="h-[143px]" />
      </div>
      <div className="flex shrink-0 bg-[#f0f0f0]">
        <HScroll thumb="w-[33px]" className="flex-1" />
        <svg viewBox="0 0 16 16" className="h-4 w-4" fill="#b5b5b5">
          <path d="M10 5h2v2h-2zM10 9h2v2h-2zM6 9h2v2H6zM10 13h2v2h-2zM6 13h2v2H6zM2 13h2v2H2z" />
        </svg>
      </div>
    </Win>
  );
}

function ProcessWindow() {
  return (
    <Win title="Postup XRA..." body="bg-[#f0f0f0] border-l-2 border-t-2 border-[#8a8a8a]">
      <div className="mr-[2px] flex h-[202px] shrink-0 flex-col border-b-2 border-[#8a8a8a] bg-[#f5f9fd] pl-[6px]">
        <div className="mt-[7px] ml-[3px] flex h-[73px] shrink-0 flex-col gap-[7px] overflow-hidden bg-white pt-[5px] pl-[6px]">
          <div className="flex gap-[5px]">
            <Field label="Pracoviště:" value="00015" lw="w-[102px]" w="w-[71px]" />
            <input readOnly aria-label="Název pracoviště" value="Rez" className="h-4 w-24 shrink-0 border border-[#adadad] outline-none" />
          </div>
          <div className="flex">
            <input readOnly aria-label="Číslo operace" value="10" className="h-4 w-[51px] shrink-0 border border-[#adadad] text-center font-bold outline-none" />
            <Field label="Popis:" value="Pálit" lw="w-[51px]" w="w-40" />
          </div>
          <div className="flex whitespace-nowrap">
            <span className="w-[102px] shrink-0 pr-1 text-right">Zapsal:</span>
            <span>MBr&nbsp; 17. 10. 201</span>
          </div>
        </div>
        <textarea
          readOnly
          aria-label="Text operace"
          value={'Brousit plochu "12"\nPřesně řezat na L="20"\nŘezat "1"x závit M"12"-"5" do\nTest'}
          className={`mt-px h-[113px] shrink-0 resize-none overflow-hidden border border-r-0 border-[#a0a0a0] bg-white pt-[2px] pl-px leading-4 whitespace-pre outline-none ${mono}`}
        />
      </div>
      <OperationsWindow />
    </Win>
  );
}

/* ---------- window 5 ---------- */

const drawings = [["0260200002701E"], ["sss"], ["XHK01-18"], ["0211760241401F"]];

function Tick({ label, on }) {
  return (
    <span className="mx-auto grid w-[14px] place-items-center">
      <input type="checkbox" aria-label={label} defaultChecked={on} className="peer h-[13px] w-[13px] appearance-none border border-[#444] bg-white [grid-area:1/1]" />
      <svg viewBox="0 0 10 10" className="pointer-events-none hidden h-[10px] w-[10px] [grid-area:1/1] peer-checked:block" fill="none" stroke="#000" strokeWidth="2.200">
        <path d="M1 4.500 4 7.500 9 1.500" />
      </svg>
    </span>
  );
}

function OrderWindow() {
  const lw = "w-16";
  return (
    <Win title="Zakázka XH..." body="bg-white pt-[3px] px-[2px] pb-1">
      <div className="mr-px flex h-[147px] shrink-0 flex-col border-t-2 border-l-2 border-[#8a8a8a] bg-[#f0f0f0]">
        <div className="flex min-h-0 flex-1">
          <div className="flex min-w-0 flex-1 flex-col gap-[5px] overflow-hidden border-r border-b border-white pt-[3px]">
            <Field label="Zakázka :" value="XHK01" lw={`${lw} text-[12px] font-bold`} text="text-[12px] font-bold" />
            <Field label="Název :" value="XHK01" lw={lw} />
            <div className="flex">
              <Field label="Klíč:" value="1" lw={lw} w="w-[63px]" />
              <label className="flex shrink-0 items-center gap-[6px] pl-2">UP1:<input readOnly className="h-4 w-20 border border-[#adadad]" /></label>
            </div>
            <Field label="Partner :" value="EPe" lw={lw} w="w-[113px]" text="" />
            <Field label="Schválil:" value="dbo" lw={lw} w="w-[121px]" text="" />
            <Field label="Zapsal:" value="BB\Administrator" lw={lw} w="w-[121px]" text="" />
          </div>
          <VScroll thumb="mb-2 flex-1" className="mr-px" />
        </div>
        <HScroll thumb="w-[47px]" className="mr-[17px]" />
      </div>
      <div className="mt-2 mr-px flex min-h-0 flex-1 flex-col border-t-2 border-l-2 border-[#8a8a8a] pb-1">
        <table className="w-full table-fixed border-collapse">
          <colgroup>
            <col className="w-[25px]" /><col className="w-[30px]" /><col className="w-[18px]" /><col className="w-[19px]" /><col />
          </colgroup>
          <thead>
            <tr className="h-[20px] border-b border-[#888] bg-[#f0f0f0]">
              <th className="border-r border-[#d0d0d0]" />
              <th className="border-r border-[#d0d0d0] font-normal">Stav</th>
              <th className="border-r border-[#d0d0d0] font-normal">PZ</th>
              <th className="border-r border-[#888] font-normal">PF</th>
              <th className="pl-1 text-left font-normal">Výkres «</th>
            </tr>
          </thead>
          <tbody>
            {drawings.map(([d], i) => (
              <tr key={d} className="h-4 border-b border-[#e4e4e4]">
                <td className={`border-r border-[#e4e4e4] bg-[#c0c0c0] text-center ${i === 0 ? "font-bold" : "text-[#858585]"}`}>{i + 1}</td>
                <td className="border-r border-[#e4e4e4]" />
                <td className="border-r border-[#e4e4e4]"><Tick label={`PZ ${d}`} on /></td>
                <td className="border-r border-[#e4e4e4]"><Tick label={`PF ${d}`} /></td>
                <td className="pl-px">{d}</td>
              </tr>
            ))}
          </tbody>
        </table>
        <HScroll thumb="w-[17px]" className="mt-auto" />
      </div>
    </Win>
  );
}

/* ---------- window 6 ---------- */

const parts = [
  { pos: "2", key: "10759", name: "Trubka r", attr: "CrMo", sel: true },
  { pos: "3", key: "10758", name: "Trubka p", attr: "8/1.5" },
  { pos: "3", key: "10759", name: "Trubka r", attr: "CrMo", green: true },
  { pos: "4", drawing: "XTR01-A", key: "11702", idx: "B", name: "Náboj st", clip: true },
  { pos: "5", drawing: "XTR02-A", key: "11703", idx: "B", name: "Náboj př", clip: true },
  { pos: "6", key: "10247", name: "Barva vr", clip: true },
];

function PartsWindow() {
  return (
    <Win title="T rozpiska X..." active body="bg-white">
      <div className="overflow-hidden whitespace-nowrap">
        <dl className="grid grid-cols-[85px_70px_13px_1fr] pt-1 pb-px pl-[2px] leading-[15px]">
          <dt className="italic">Výkres / klíč</dt><dt className="italic">Index</dt><dd /><dt className="italic">Název</dt>
          <dd className="font-bold">XRA01-16b</dd><dd /><dd><Clip /></dd><dd className="font-bold">Rám MTB</dd>
          <dd>14528</dd><dd /><dd /><dd className="font-bold">125</dd>
        </dl>
        <table className="w-full table-fixed border-collapse">
          <colgroup><col className="w-[54px]" /><col className="w-[78px]" /><col className="w-[38px]" /><col /></colgroup>
          <thead className="border-b-2 border-black text-left italic">
            <tr className="h-[15px]">
              <th className="pl-[6px] font-normal">Pozice</th><th className="font-normal">Výkres</th><th className="font-normal">Index</th><th className="font-normal">Název po</th>
            </tr>
            <tr className="h-[17px]">
              <th className="pl-[6px] font-normal">Platnost</th><th className="font-normal">Klíč položky</th><th /><th className="font-normal">Atributy p</th>
            </tr>
          </thead>
          {parts.map((p, i) => {
            const tone = p.sel ? "text-white" : p.green ? "text-[#0a820a]" : "";
            return (
              <tbody key={i} className={`border-b border-black ${p.sel ? "bg-[#3399ff] text-white" : ""}`}>
                <tr className="h-5">
                  <td className={`text-center font-bold ${p.sel ? "" : "text-[#1414d2]"}`}>{p.pos}</td>
                  <td>{p.drawing}</td><td />
                  <td className={`overflow-hidden pl-px font-bold ${tone}`}>{p.name}</td>
                </tr>
                <tr className="h-[18px]">
                  <td>
                    <span className="flex items-center justify-center pl-1 text-[9px]">1 -<span className="text-[13px] leading-none">∞</span></span>
                  </td>
                  <td>
                    <span className="flex items-center justify-between pr-1 pl-[2px]">
                      {p.clip ? <Clip /> : <span />}{p.key}
                    </span>
                  </td>
                  <td className="font-bold">{p.idx}</td>
                  <td className={`overflow-hidden pl-px ${tone}`}>{p.attr}</td>
                </tr>
              </tbody>
            );
          })}
        </table>
      </div>
      <HScroll dark thumb="w-7" className="mt-auto" />
    </Win>
  );
}

/* ---------- application ---------- */

const menu = [["O", "b", "jekt"], ["Úpr", "a", "vy"], ["Ov", "l", "ádání"], ["", "F", "unkce"], ["", "O", "kno"], ["Nápo", "v", "ěda"]];

export default function App() {
  return (
    <div className="flex h-screen flex-col overflow-hidden border-t-2 border-[#6f86a5] bg-[#8fa8c5] px-2 pb-2 font-['Liberation_Sans',Arial,sans-serif] text-[11px] leading-[13px] text-black">
      <header className="flex h-[29px] shrink-0">
        <span className="pt-[5px] pl-[2px]"><Logo /></span>
        <h1 className="flex-1 pt-1 pl-[120px] text-center font-['Open_Sans',sans-serif] text-[14px] leading-5 text-[#1d2630]">TPV2000 plus (TPVVyvoj)</h1>
        <div className="flex h-[19px] items-center">
          <svg viewBox="0 0 12 8" className="mr-[29px] h-2 w-3" fill="#1d2630"><path d="M0 4 4 0.500V3h4V.500L12 4 8 7.500V5H4v2.500z" /></svg>
          <button type="button" aria-label="Minimalizovat" className="grid h-[19px] w-[27px] place-items-center">
            <span className="mt-1 h-[2px] w-2 bg-[#1d2630]" />
          </button>
          <button type="button" aria-label="Obnovit" className="grid h-[19px] w-[27px] place-items-center">
            <span className="h-2 w-[10px] border border-t-2 border-[#1d2630]" />
          </button>
          <button type="button" aria-label="Zavřít" className="grid h-5 w-[45px] place-items-center self-start bg-[#c75050]">
            <svg viewBox="0 0 8 8" className="h-2 w-2" stroke="#fff" strokeWidth="1.700"><path d="m.500.500 7 7M7.500.500l-7 7" /></svg>
          </button>
        </div>
      </header>

      <div className="flex min-h-0 flex-1 flex-col bg-[#f0f0f0]">
        <nav className="flex h-[21px] shrink-0 items-center gap-4 pl-[10px] font-['Open_Sans',sans-serif]">
          {menu.map(([a, u, b]) => (
            <button key={a + u + b} type="button">{a}<span className="underline">{u}</span>{b}</button>
          ))}
        </nav>
        <Toolbar />
        <div className="flex min-h-0 flex-1 border-t-2 border-[#9c9c9c]">
          <SideBar />
          <main className="grid min-w-0 flex-1 grid-cols-6 border-l-2 border-[#9c9c9c] bg-[#ababab] pt-px">
            <TasksWindow />
            <OfferWindow />
            <ItemsWindow />
            <ProcessWindow />
            <OrderWindow />
            <PartsWindow />
          </main>
        </div>
        <footer className="flex h-6 shrink-0 border-t-2 border-[#a0a0a0] pt-1">
          <div className="flex flex-1 items-stretch border-t border-[#a0a0a0]">
            <span className="flex-1" />
            <span className="flex w-[285px] items-center border-l border-[#777] pl-[2px]">Název nabídky</span>
            <span className="flex w-[78px] items-center justify-center border-l border-[#777]">1/1/6</span>
            <span className="flex w-[110px] items-center border-l border-[#777] pl-[2px]">MBr</span>
            <span className="flex w-[126px] items-center justify-center border-l border-[#777] pr-[10px] text-[#8b0000]">Vývojová databáze</span>
          </div>
        </footer>
      </div>
    </div>
  );
}
